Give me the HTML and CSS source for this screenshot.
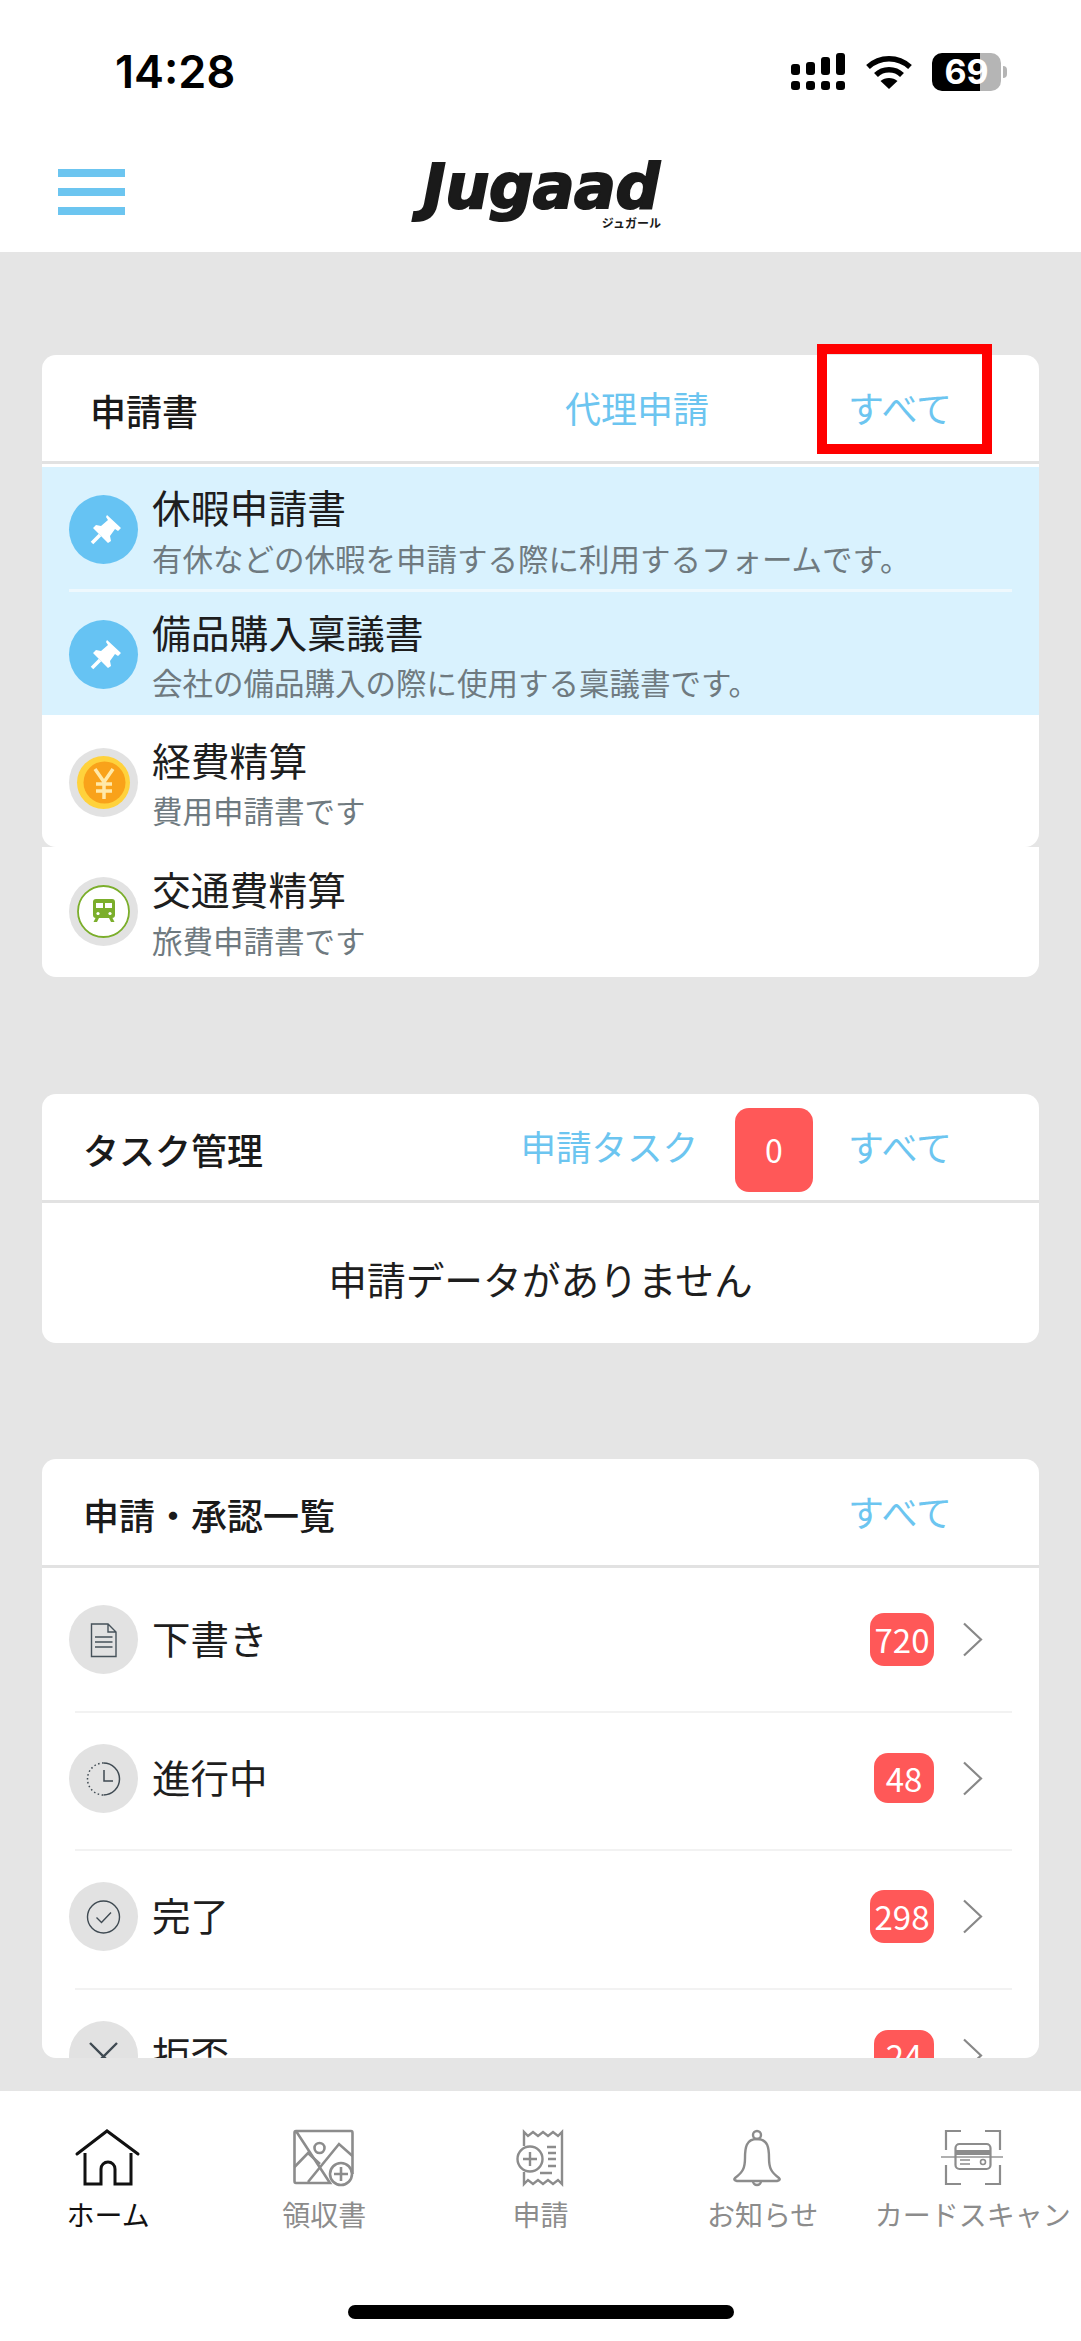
FILE: index.html
```html
<!DOCTYPE html>
<html lang="ja">
<head>
    <meta charset="UTF-8">
    <title>Jugaad</title>
    <link rel="stylesheet" href="styles.css">
</head>
<body>
<div class="status-bar">
    <div class="time">14:28</div>
    <div class="status-icons">
        <svg class="signal" width="56" height="40" viewBox="0 0 56 40" fill="#000">
            <rect x="1" y="11" width="9" height="11" rx="3"/>
            <rect x="16" y="9" width="9" height="13" rx="3"/>
            <rect x="31" y="4" width="9" height="18" rx="3"/>
            <rect x="46" y="0" width="9" height="22" rx="3"/>
            <rect x="1" y="28" width="9" height="9" rx="3"/>
            <rect x="16" y="28" width="9" height="9" rx="3"/>
            <rect x="31" y="28" width="9" height="9" rx="3"/>
            <rect x="46" y="28" width="9" height="9" rx="3"/>
        </svg>
        <svg class="wifi" width="48" height="36" viewBox="0 0 48 36" fill="none" stroke="#000" stroke-width="5.5">
            <path d="M3 13C15 2 33 2 45 13"/>
            <path d="M11 21C18 14 30 14 37 21"/>
            <path d="M24 35 15.500 27C20 23 28 23 32.500 27Z" fill="#000" stroke="none"/>
        </svg>
        <div class="battery">69</div>
        <div class="battery-tip"></div>
    </div>
</div>

<header class="nav">
    <div class="menu-btn"><span></span><span></span><span></span></div>
    <div class="logo">
        <div class="logo-word">Jugaad</div>
        <div class="logo-kana">ジュガール</div>
    </div>
</header>

<main class="content">
    <section class="card card-forms">
        <div class="card-head">
            <div class="head-title title-short">申請書</div>
            <div class="head-link link-proxy">代理申請</div>
            <div class="head-link link-all">すべて</div>
            <div class="highlight-box"></div>
        </div>
        <div class="form-list">
            <div class="row row-pinned">
                <div class="circle circle-pin">
                    <svg width="69" height="69" viewBox="0 0 69 69"><path d="M38 20 52 33 49 36 46 34 41 41 42 46 39 48 24 33 27 30 32 31 39 25 37 22Z" fill="#fff"/><path d="M31 40 23 48" stroke="#fff" stroke-width="3.500"/></svg>
                </div>
                <div class="row-text">
                    <div class="row-title">休暇申請書</div>
                    <div class="row-sub">有休などの休暇を申請する際に利用するフォームです。</div>
                </div>
            </div>
            <div class="row row-pinned row-last">
                <div class="circle circle-pin">
                    <svg width="69" height="69" viewBox="0 0 69 69"><path d="M38 20 52 33 49 36 46 34 41 41 42 46 39 48 24 33 27 30 32 31 39 25 37 22Z" fill="#fff"/><path d="M31 40 23 48" stroke="#fff" stroke-width="3.500"/></svg>
                </div>
                <div class="row-text">
                    <div class="row-title">備品購入稟議書</div>
                    <div class="row-sub">会社の備品購入の際に使用する稟議書です。</div>
                </div>
            </div>
            <div class="row row-expense">
                <div class="circle">
                    <svg width="69" height="69" viewBox="0 0 69 69">
                        <circle cx="34.500" cy="34.500" r="26.500" fill="#ffd23c"/>
                        <circle cx="35.500" cy="34.500" r="21" fill="#f9a21a"/>
                        <path d="M26 21 35 34 44 21M35 34V51M27 36H43M27 43H43" fill="none" stroke="#ffe9a8" stroke-width="3.500"/>
                    </svg>
                </div>
                <div class="row-text">
                    <div class="row-title">経費精算</div>
                    <div class="row-sub">費用申請書です</div>
                </div>
            </div>
        </div>
    </section>
    <section class="card card-extra">
        <div class="row row-transport">
            <div class="circle">
                <svg width="69" height="69" viewBox="0 0 69 69">
                    <circle cx="34.500" cy="34.500" r="25.500" fill="#fff" stroke="#7bae2b" stroke-width="1.800"/>
                    <path d="M27 22H43Q46 22 46 25V38Q46 41 43 41H27Q24 41 24 38V25Q24 22 27 22ZM26.500 41 24.500 45H28L30 41ZM43.500 41 45.500 45H42L40 41Z" fill="#7bae2b"/>
                    <rect x="27" y="26" width="7" height="5" fill="#fff"/>
                    <rect x="36" y="26" width="7" height="5" fill="#fff"/>
                    <circle cx="29" cy="36.500" r="1.600" fill="#fff"/>
                    <circle cx="41" cy="36.500" r="1.600" fill="#fff"/>
                </svg>
            </div>
            <div class="row-text">
                <div class="row-title">交通費精算</div>
                <div class="row-sub">旅費申請書です</div>
            </div>
        </div>
    </section>

    <section class="card card-tasks">
        <div class="card-head">
            <div class="head-title">タスク管理</div>
            <div class="head-link link-tasks">申請タスク</div>
            <div class="count-badge">0</div>
            <div class="head-link link-all-b">すべて</div>
        </div>
        <div class="empty-msg">申請データがありません</div>
    </section>

    <section class="card card-status">
        <div class="card-head">
            <div class="head-title">申請・承認一覧</div>
            <div class="head-link link-all-b">すべて</div>
        </div>
        <div class="status-list">
            <div class="status-row">
                <div class="circle">
                    <svg width="69" height="69" viewBox="0 0 69 69" fill="none" stroke="#46525a" stroke-width="1.400">
                        <path d="M22.500 19H39L47 27V51.500H22.500ZM39 19V27H47"/>
                        <path d="M26 32H43.500M26 37H43.500M26 42H43.500" stroke-width="1.300"/>
                    </svg>
                </div>
                <div class="status-label">下書き</div>
                <div class="badge">720</div>
                <svg class="chevron" width="21" height="35" viewBox="0 0 21 35"><path d="M2 1.500 19 17.500 2 33.500" fill="none" stroke="#888" stroke-width="2.200"/></svg>
            </div>
            <div class="status-row">
                <div class="circle">
                    <svg width="69" height="69" viewBox="0 0 69 69" fill="none" stroke="#3f4a52" stroke-width="1.500">
                        <path d="M34.500 19A16 16 0 1 1 34.500 51"/>
                        <path d="M34.500 19A16 16 0 0 0 34.500 51" stroke-dasharray="1.500 2.500"/>
                        <path d="M35 26V37H44"/>
                    </svg>
                </div>
                <div class="status-label">進行中</div>
                <div class="badge badge-small">48</div>
                <svg class="chevron" width="21" height="35" viewBox="0 0 21 35"><path d="M2 1.500 19 17.500 2 33.500" fill="none" stroke="#888" stroke-width="2.200"/></svg>
            </div>
            <div class="status-row">
                <div class="circle">
                    <svg width="69" height="69" viewBox="0 0 69 69" fill="none" stroke="#3f4a52" stroke-width="1.400">
                        <circle cx="34.500" cy="35" r="16"/>
                        <path d="M27.500 35.500 32.500 40.500 42 30.500"/>
                    </svg>
                </div>
                <div class="status-label">完了</div>
                <div class="badge">298</div>
                <svg class="chevron" width="21" height="35" viewBox="0 0 21 35"><path d="M2 1.500 19 17.500 2 33.500" fill="none" stroke="#888" stroke-width="2.200"/></svg>
            </div>
            <div class="status-row">
                <div class="circle">
                    <svg width="69" height="69" viewBox="0 0 69 69" fill="none" stroke="#3f4a52" stroke-width="2.400">
                        <path d="M21 22 48 49M48 22 21 49"/>
                    </svg>
                </div>
                <div class="status-label">拒否</div>
                <div class="badge badge-small">24</div>
                <svg class="chevron" width="21" height="35" viewBox="0 0 21 35"><path d="M2 1.500 19 17.500 2 33.500" fill="none" stroke="#888" stroke-width="2.200"/></svg>
            </div>
        </div>
    </section>
</main>

<nav class="tabbar">
    <div class="tab tab-active">
        <svg width="80" height="62" viewBox="0 0 80 62" fill="none" stroke="#111" stroke-width="3">
            <path d="M9 26 39 3 70 26" stroke-linecap="round"/>
            <path d="M17 25V56H33V41A7 7 0 0 1 47 41V56H63V25"/>
        </svg>
        <span>ホーム</span>
    </div>
    <div class="tab">
        <svg width="80" height="62" viewBox="0 0 80 62" fill="none" stroke="#8c8c8c" stroke-width="2.600">
            <path d="M12 3H67Q68.500 3 68.500 5V46M46 55H12Q10.500 55 10.500 53V5Q10.500 3 12 3Z"/>
            <circle cx="35.500" cy="20" r="5"/>
            <path d="M10.500 39 24 25 36 36M24 54 55 16 68.500 28"/>
            <circle cx="57" cy="46" r="11" fill="#fff"/>
            <path d="M57 39V53M50 46H64"/>
        </svg>
        <span>領収書</span>
    </div>
    <div class="tab">
        <svg width="80" height="62" viewBox="0 0 80 62" fill="none" stroke="#8c8c8c" stroke-width="2.400">
            <path d="M24 18V4L28 8 33 4 38 8 43 4 48 8 53 4 58 8 62 4V56L58 52 53 56 48 52 43 56 38 52 33 56 28 52 24 56V44"/>
            <circle cx="30" cy="31" r="12.500" fill="#fff"/>
            <path d="M30 24V38M23 31H37M47 19H56M48 25H56M48 31H56M48 38H56M40 45H52"/>
        </svg>
        <span>申請</span>
    </div>
    <div class="tab">
        <svg width="80" height="62" viewBox="0 0 80 62" fill="none" stroke="#8c8c8c" stroke-width="2.400">
            <circle cx="40" cy="7" r="4"/>
            <path d="M40 11C29 11 28 20 28 30C28 40 26 44 18 50Q16 52 20 53H60Q64 52 62 50C54 44 52 40 52 30C52 20 51 11 40 11Z"/>
            <path d="M36 53A4 4 0 0 0 44 53"/>
        </svg>
        <span class="tab-shifted">お知らせ</span>
    </div>
    <div class="tab">
        <svg width="80" height="62" viewBox="0 0 80 62" fill="none" stroke="#8c8c8c" stroke-width="2.200">
            <path d="M28 3H13V22M52 3H67V22M13 37V56H28M67 37V56H52"/>
            <path d="M8 29H70" stroke="#b0b0b0"/>
            <rect x="22.500" y="16" width="35" height="25" rx="4"/>
            <path d="M22.500 22H57.500V27H22.500Z" fill="#8c8c8c" stroke="none"/>
            <path d="M27 32H37M27 36H37" stroke-width="1.600"/>
            <circle cx="50" cy="34" r="2.500" stroke-width="1.600"/>
        </svg>
        <span>カードスキャン</span>
    </div>
    <div class="home-pill"></div>
</nav>
</body>
</html>
```

FILE: styles.css
```css
body,html{
    padding: 0;
    margin: 0;
    background-color: #fff;
}
body{
    width: 1081px;
    height: 2341px;
    overflow: hidden;
    font-family: "Noto Sans CJK JP", "Noto Sans", sans-serif;
    color: #1e1e1e;
}
.status-bar{
    height: 140px;
    display: flex;
    justify-content: space-between;
    padding: 46px 74px 0 115px;
    box-sizing: border-box;
}
.time{
    font-family: Inter, "Liberation Sans", sans-serif;
    font-size: 45px;
    font-weight: 600;
    line-height: 52px;
    color: #000;
}
.status-icons{
    display: flex;
    align-items: flex-start;
    margin-top: 7px;
}
.signal{
    margin-right: 19px;
}
.wifi{
    margin-right: 19px;
    margin-top: 1px;
}
.battery{
    width: 69px;
    height: 38px;
    border-radius: 10px;
    background: linear-gradient(90deg, #000 70%, #b5b5b5 70%);
    color: #fff;
    font-family: Inter, "Liberation Sans", sans-serif;
    font-size: 34px;
    font-weight: 700;
    line-height: 38px;
    text-align: center;
}
.battery-tip{
    width: 4px;
    height: 12px;
    margin: 13px 0 0 2px;
    border-radius: 0 6px 6px 0;
    background-color: #b5b5b5;
}
.nav{
    height: 112px;
    position: relative;
    display: flex;
    justify-content: center;
    padding-top: 17px;
    box-sizing: border-box;
}
.menu-btn{
    position: absolute;
    left: 58px;
    top: 29px;
    width: 67px;
    display: flex;
    flex-direction: column;
    gap: 11px;
}
.menu-btn span{
    height: 8px;
    background-color: #6cc5f0;
}
.logo{
    width: 250px;
    margin-left: 1px;
    display: flex;
    flex-direction: column;
    align-items: flex-end;
}
.logo-word{
    align-self: center;
    font-family: "DejaVu Sans", sans-serif;
    font-size: 62px;
    font-weight: 700;
    font-style: italic;
    line-height: 59px;
    letter-spacing: -0.5px;
    color: #1a1a1a;
    -webkit-text-stroke: 2px #1a1a1a;
}
.logo-kana{
    font-size: 12px;
    font-weight: 700;
    line-height: 14px;
    margin-right: 5px;
    color: #1a1a1a;
}
.content{
    height: 1839px;
    overflow: hidden;
    background-color: #e5e5e5;
    padding-top: 103px;
    box-sizing: border-box;
}
.card{
    width: 997px;
    margin-left: 42px;
    background-color: #fff;
    border-radius: 14px;
    overflow: hidden;
}
.card-forms{
    height: 492px;
    overflow: visible;
}
.card-extra{
    height: 130px;
    border-radius: 0 0 14px 14px;
}
.card-tasks{
    margin-top: 117px;
    height: 249px;
}
.card-status{
    margin-top: 116px;
    height: 599px;
}
.card-head{
    position: relative;
    height: 109px;
    box-sizing: border-box;
    border-bottom: 3px solid #e2e2e2;
    display: flex;
    align-items: center;
    padding: 0 89px 0 41px;
}
.head-title{
    margin-right: auto;
    margin-top: 3px;
    font-size: 36px;
    font-weight: 500;
    line-height: 50px;
    color: #1a1a1a;
}
.title-short{
    margin-left: 7px;
}
.head-link{
    font-size: 36px;
    line-height: 50px;
    color: #6cc5f0;
    margin-top: -3px;
}
.link-proxy{
    margin-right: 139px;
}
.link-tasks{
    font-size: 35.500px;
}
.link-all{
    width: 102px;
    white-space: nowrap;
}
.link-all-b{
    width: 102px;
    white-space: nowrap;
}
.highlight-box{
    position: absolute;
    left: 775px;
    top: -11px;
    width: 175px;
    height: 110px;
    box-sizing: border-box;
    border: 10px solid #f00;
}
.count-badge{
    width: 78px;
    height: 84px;
    margin: 6px 35px 0 37px;
    border-radius: 14px;
    background-color: #ff5858;
    color: #fff;
    font-size: 32px;
    line-height: 82px;
    text-align: center;
}
.empty-msg{
    text-align: center;
    font-size: 38.700px;
    line-height: 56px;
    padding-top: 47px;
    color: #1e1e1e;
}
.form-list{
    padding-top: 3px;
}
.row{
    display: flex;
    align-items: flex-start;
    box-sizing: border-box;
    padding-left: 27px;
}
.row-pinned{
    position: relative;
    height: 124.500px;
    padding-top: 17px;
    background-color: #d9f2fe;
}
.row-pinned::after{
    content: "";
    position: absolute;
    left: 27px;
    right: 27px;
    bottom: 0;
    height: 3px;
    background-color: #eef8fd;
}
.row-last{
    height: 123px;
}
.row-last::after{
    display: none;
}
.row-expense{
    height: 133.500px;
    padding-top: 22px;
}
.row-transport{
    height: 130px;
    padding-top: 19px;
}
.circle{
    flex: none;
    width: 69px;
    height: 69px;
    border-radius: 50%;
    background-color: #e2e2e2;
}
.circle svg{
    display: block;
}
.row .circle{
    margin-top: 11px;
}
.circle-pin{
    background-color: #66c3f3;
}
.row-text{
    margin-left: 14px;
}
.row-title{
    font-size: 38.800px;
    line-height: 44px;
    color: #1e1e1e;
}
.row-sub{
    font-size: 30.500px;
    line-height: 40px;
    margin-top: 9.500px;
    color: #6f7a80;
    white-space: nowrap;
}
.status-list{
    padding-top: 6px;
}
.status-row{
    display: flex;
    align-items: center;
    box-sizing: border-box;
    margin: 0 27px 0 27px;
    height: 138.500px;
    padding: 30px 0 37px;
    position: relative;
}
.status-row::after{
    content: "";
    position: absolute;
    left: 6px;
    right: 0;
    bottom: 0;
    height: 2px;
    background-color: #f2f2f2;
}
.status-label{
    margin-left: 14px;
    margin-right: auto;
    margin-top: -5px;
    font-size: 38.500px;
    line-height: 50px;
}
.badge{
    width: 64px;
    height: 53px;
    border-radius: 14px;
    background-color: #ff5858;
    color: #fff;
    font-size: 33px;
    line-height: 53px;
    text-align: center;
}
.badge-small{
    width: 60px;
    height: 50px;
    line-height: 50px;
}
.chevron{
    margin-left: 28px;
    margin-right: 29px;
}
.tabbar{
    position: relative;
    height: 250px;
    display: grid;
    grid-template-columns: repeat(5, 216.200px);
    align-content: start;
    padding-top: 37px;
    box-sizing: border-box;
}
.tab{
    display: flex;
    flex-direction: column;
    align-items: center;
    color: #8c8c8c;
    font-size: 28px;
    line-height: 38px;
    white-space: nowrap;
}
.tab span{
    margin-top: 5px;
}
.tab span.tab-shifted{
    padding-left: 12px;
}
.tab-active{
    color: #111;
}
.home-pill{
    position: absolute;
    left: 348px;
    top: 214px;
    width: 386px;
    height: 14px;
    border-radius: 7px;
    background-color: #000;
}
```
